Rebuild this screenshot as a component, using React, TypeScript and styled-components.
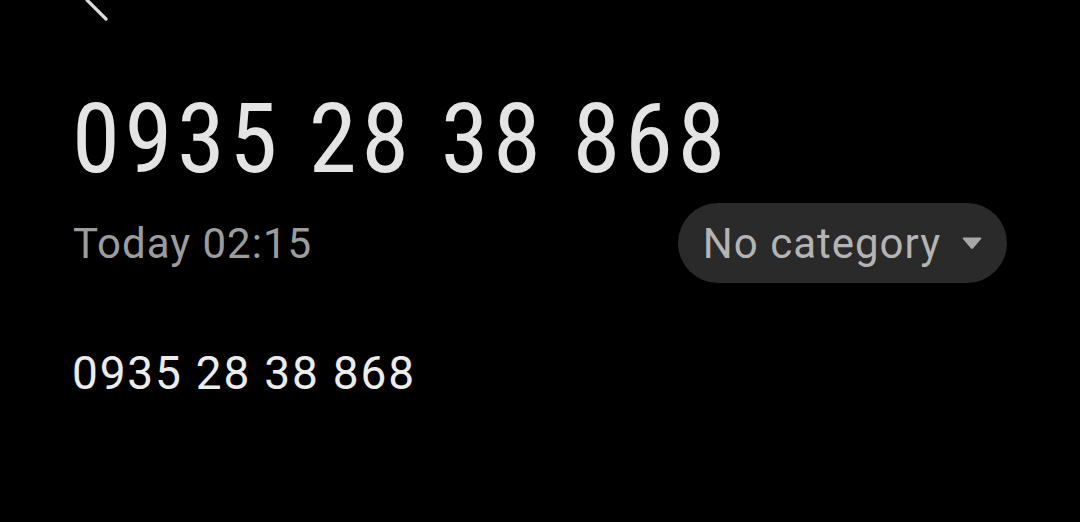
import React from "react";
import styled, { createGlobalStyle } from "styled-components";

const GlobalStyle = createGlobalStyle`
  html, body {
    margin: 0;
    padding: 0;
    background: #000;
    overflow: hidden;
  }
  body {
    font-family: Roboto, "Noto Sans", sans-serif;
    -webkit-font-smoothing: antialiased;
  }
`;

const Page = styled.div`
  width: 1080px;
  height: 522px;
  background: #000;
  display: flex;
  flex-direction: column;
  padding: 0 73px 0 72px;
  box-sizing: border-box;
`;

const Header = styled.div`
  display: flex;
  align-items: center;
  height: 42px;
  margin-top: -21px;
  margin-left: 12px;
`;

const BackIcon = styled.svg`
  width: 26px;
  height: 42px;
  display: block;
`;

const Title = styled.h1`
  margin: 58px 0 0 0;
  font-family: "Roboto Condensed", Roboto, sans-serif;
  font-weight: 400;
  font-size: 97px;
  line-height: 120px;
  letter-spacing: 4.6px;
  color: #e4e4e4;
  white-space: nowrap;
`;

const MetaRow = styled.div`
  display: flex;
  align-items: center;
  justify-content: space-between;
  margin-top: 4px;
  height: 80px;
`;

const Timestamp = styled.span`
  font-size: 42px;
  letter-spacing: 1px;
  color: #9c9c9c;
  margin-left: 1px;
`;

const CategoryPill = styled.button`
  display: flex;
  align-items: center;
  gap: 20px;
  height: 80px;
  padding: 0 24px 0 25px;
  border: none;
  border-radius: 40px;
  background: #2a2a2a;
  color: #b4b4b4;
  font-family: Roboto, sans-serif;
  font-size: 42px;
  letter-spacing: 1px;
  cursor: pointer;
`;

const Caret = styled.svg`
  width: 22px;
  height: 14px;
  display: block;
`;

const Number = styled.div`
  margin-top: 60px;
  font-size: 46px;
  line-height: 60px;
  letter-spacing: 1.8px;
  color: #ececec;
  white-space: nowrap;
`;

export default function App() {
  return (
    <>
      <GlobalStyle />
      <Page>
        <Header>
          <BackIcon viewBox="0 0 26 42" fill="none">
            <path
              d="M22 2 L3 21 L22 40"
              stroke="#dcdcdc"
              strokeWidth="3.2"
              strokeLinecap="round"
              strokeLinejoin="round"
            />
          </BackIcon>
        </Header>
        <Title>0935 28 38 868</Title>
        <MetaRow>
          <Timestamp>Today 02:15</Timestamp>
          <CategoryPill>
            No category
            <Caret viewBox="0 0 22 14">
              <path d="M2.5 1.5 H19.5 Q21 1.5 20 3 L12.2 12.2 Q11 13.5 9.8 12.2 L2 3 Q1 1.5 2.5 1.5 Z" fill="#a8a8a8" />
            </Caret>
          </CategoryPill>
        </MetaRow>
        <Number>0935 28 38 868</Number>
      </Page>
    </>
  );
}
